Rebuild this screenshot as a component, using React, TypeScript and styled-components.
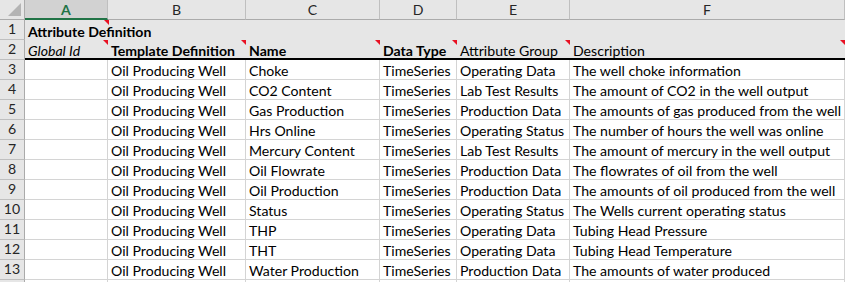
import React from 'react';
import styled, { createGlobalStyle, css } from 'styled-components';

const GlobalStyle = createGlobalStyle`
  html, body {
    margin: 0;
    padding: 0;
    background: #ffffff;
  }
  body {
    font-family: Lato, 'Liberation Sans', sans-serif;
  }
`;

const COLUMNS = ['A', 'B', 'C', 'D', 'E', 'F'];
const WIDTHS = '25px 83px 138px 134px 77px 113px 275px';

type Row = [string, string, string, string, string];

const ROWS: Row[] = [
  ['Oil Producing Well', 'Choke', 'TimeSeries', 'Operating Data', 'The well choke information'],
  ['Oil Producing Well', 'CO2 Content', 'TimeSeries', 'Lab Test Results', 'The amount of CO2 in the well output'],
  ['Oil Producing Well', 'Gas Production', 'TimeSeries', 'Production Data', 'The amounts of gas produced from the well'],
  ['Oil Producing Well', 'Hrs Online', 'TimeSeries', 'Operating Status', 'The number of hours the well was online'],
  ['Oil Producing Well', 'Mercury Content', 'TimeSeries', 'Lab Test Results', 'The amount of mercury in the well output'],
  ['Oil Producing Well', 'Oil Flowrate', 'TimeSeries', 'Production Data', 'The flowrates of oil from the well'],
  ['Oil Producing Well', 'Oil Production', 'TimeSeries', 'Production Data', 'The amounts of oil produced from the well'],
  ['Oil Producing Well', 'Status', 'TimeSeries', 'Operating Status', 'The Wells current operating status'],
  ['Oil Producing Well', 'THP', 'TimeSeries', 'Operating Data', 'Tubing Head Pressure'],
  ['Oil Producing Well', 'THT', 'TimeSeries', 'Operating Data', 'Tubing Head Temperature'],
  ['Oil Producing Well', 'Water Production', 'TimeSeries', 'Production Data', 'The amounts of water produced'],
];

const HEADINGS: { text: string; weight: 'bold' | 'normal'; italic?: boolean }[] = [
  { text: 'Global Id', weight: 'normal', italic: true },
  { text: 'Template Definition', weight: 'bold' },
  { text: 'Name', weight: 'bold' },
  { text: 'Data Type', weight: 'bold' },
  { text: 'Attribute Group', weight: 'normal' },
  { text: 'Description', weight: 'normal' },
];

const App = () => {
  return (
    <>
      <GlobalStyle />
      <SSheet>
        <SCorner>
          <svg width="13" height="13" viewBox="0 0 13 13">
            <polygon points="13,0 13,13 0,13" fill="#b4b4b4" />
          </svg>
        </SCorner>
        {COLUMNS.map(col => (
          <SColHeader key={col} selected={col === 'A'}>
            {col}
          </SColHeader>
        ))}

        <SRowHeader>1</SRowHeader>
        <STitleCell>
          Attribute Definition
          <SComment style={{ left: 79 }} />
        </STitleCell>

        <SRowHeader>2</SRowHeader>
        {HEADINGS.map(h => (
          <SHeadCell key={h.text} weight={h.weight} italic={h.italic}>
            {h.text}
            <SComment />
          </SHeadCell>
        ))}

        {ROWS.map((row, i) => (
          <React.Fragment key={i}>
            <SRowHeader>{i + 3}</SRowHeader>
            <SCell />
            {row.map((value, j) => (
              <SCell key={j}>{value}</SCell>
            ))}
          </React.Fragment>
        ))}

        <SRowHeader />
        {COLUMNS.map(col => (
          <SCell key={col} />
        ))}
      </SSheet>
    </>
  );
};

const SSheet = styled.div`
  display: grid;
  grid-template-columns: ${WIDTHS};
  grid-template-rows: 20px repeat(14, 20px);
  width: 845px;
  height: 282px;
  overflow: hidden;
  font-size: 14.1px;
  color: #000;
`;

const SCorner = styled.div`
  background: #e6e6e6;
  border-right: 1px solid #ababab;
  border-bottom: 1px solid #ababab;
  display: flex;
  align-items: flex-end;
  justify-content: flex-end;
  padding: 0 3px 3px 0;
`;

const SColHeader = styled.div<{ selected?: boolean }>`
  background: #e6e6e6;
  border-right: 1px solid #bfbfbf;
  border-bottom: 1px solid #ababab;
  display: flex;
  align-items: center;
  justify-content: center;
  font-size: 14.1px;
  color: #262626;

  ${props =>
    props.selected &&
    css`
      background: #d2d2d2;
      color: #217346;
      font-weight: bold;
      border-bottom: 2px solid #217346;
    `}
`;

const SRowHeader = styled.div`
  background: #e6e6e6;
  border-right: 1px solid #ababab;
  border-bottom: 1px solid #bfbfbf;
  display: flex;
  align-items: center;
  justify-content: center;
  color: #262626;
  line-height: 1;
`;

const STitleCell = styled.div`
  grid-column: 2 / -1;
  position: relative;
  background: #e6e6e6;
  font-weight: bold;
  padding: 2px 3px 0;
  display: flex;
  align-items: center;
  white-space: nowrap;
`;

const SHeadCell = styled.div<{ weight: 'bold' | 'normal'; italic?: boolean }>`
  position: relative;
  background: #e6e6e6;
  border-bottom: 2px solid #000;
  font-weight: ${props => props.weight};
  font-style: ${props => (props.italic ? 'italic' : 'normal')};
  padding: 2px 3px 0;
  display: flex;
  align-items: center;
  white-space: nowrap;
`;

const SCell = styled.div`
  border-right: 1px solid #d4d4d4;
  border-bottom: 1px solid #d4d4d4;
  padding: 2px 3px 0;
  display: flex;
  align-items: center;
  white-space: nowrap;
  overflow: hidden;
`;

const SComment = styled.span`
  position: absolute;
  top: 0;
  right: 0;
  width: 0;
  height: 0;
  border-top: 5px solid #e81123;
  border-left: 5px solid transparent;
`;

export default App;
